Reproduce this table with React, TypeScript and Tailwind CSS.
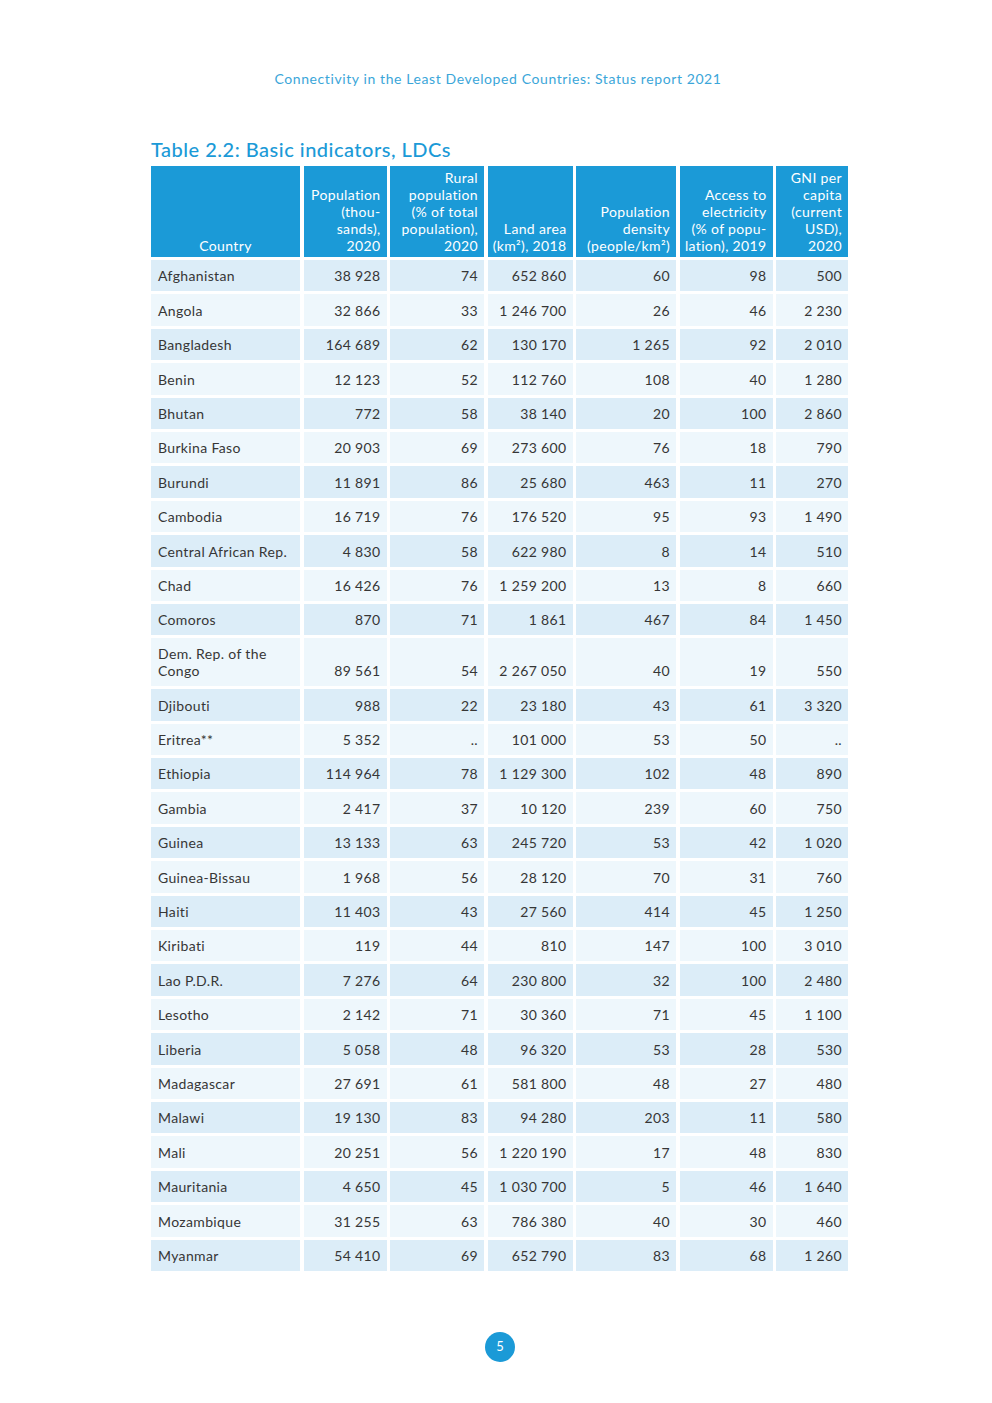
import React from "react";

const headers: React.ReactNode[] = [
  <>Country</>,
  <>Population<br />(thou-<br />sands),<br />2020</>,
  <>Rural<br />population<br />(% of total<br />population),<br />2020</>,
  <>Land area<br />(km²), 2018</>,
  <>Population<br />density<br />(people/km²)</>,
  <>Access to<br />electricity<br />(% of popu-<br />lation), 2019</>,
  <>GNI per<br />capita<br />(current<br />USD),<br />2020</>,
];

const rows: [React.ReactNode, string, string, string, string, string, string][] = [
  ["Afghanistan", "38 928", "74", "652 860", "60", "98", "500"],
  ["Angola", "32 866", "33", "1 246 700", "26", "46", "2 230"],
  ["Bangladesh", "164 689", "62", "130 170", "1 265", "92", "2 010"],
  ["Benin", "12 123", "52", "112 760", "108", "40", "1 280"],
  ["Bhutan", "772", "58", "38 140", "20", "100", "2 860"],
  ["Burkina Faso", "20 903", "69", "273 600", "76", "18", "790"],
  ["Burundi", "11 891", "86", "25 680", "463", "11", "270"],
  ["Cambodia", "16 719", "76", "176 520", "95", "93", "1 490"],
  ["Central African Rep.", "4 830", "58", "622 980", "8", "14", "510"],
  ["Chad", "16 426", "76", "1 259 200", "13", "8", "660"],
  ["Comoros", "870", "71", "1 861", "467", "84", "1 450"],
  [<>Dem. Rep. of the<br />Congo</>, "89 561", "54", "2 267 050", "40", "19", "550"],
  ["Djibouti", "988", "22", "23 180", "43", "61", "3 320"],
  ["Eritrea**", "5 352", "..", "101 000", "53", "50", ".."],
  ["Ethiopia", "114 964", "78", "1 129 300", "102", "48", "890"],
  ["Gambia", "2 417", "37", "10 120", "239", "60", "750"],
  ["Guinea", "13 133", "63", "245 720", "53", "42", "1 020"],
  ["Guinea-Bissau", "1 968", "56", "28 120", "70", "31", "760"],
  ["Haiti", "11 403", "43", "27 560", "414", "45", "1 250"],
  ["Kiribati", "119", "44", "810", "147", "100", "3 010"],
  ["Lao P.D.R.", "7 276", "64", "230 800", "32", "100", "2 480"],
  ["Lesotho", "2 142", "71", "30 360", "71", "45", "1 100"],
  ["Liberia", "5 058", "48", "96 320", "53", "28", "530"],
  ["Madagascar", "27 691", "61", "581 800", "48", "27", "480"],
  ["Malawi", "19 130", "83", "94 280", "203", "11", "580"],
  ["Mali", "20 251", "56", "1 220 190", "17", "48", "830"],
  ["Mauritania", "4 650", "45", "1 030 700", "5", "46", "1 640"],
  ["Mozambique", "31 255", "63", "786 380", "40", "30", "460"],
  ["Myanmar", "54 410", "69", "652 790", "83", "68", "1 260"],
];

export default function App() {
  return (
    <div
      className="w-[992px] min-h-[1403px] bg-white text-[#363636]"
      style={{ fontFamily: "Lato, 'Open Sans', sans-serif" }}
    >
      {/* Running header */}
      <div className="pt-[70px] pl-[4px] text-center text-[14px] leading-[18px] tracking-[0.6px] text-[#3ba6d9]">
        Connectivity in the Least Developed Countries: Status report 2021
      </div>

      <div className="ml-[151px] w-[697px]">
        <h2 className="mt-[49px] text-[20px] leading-[24px] font-medium tracking-[0.5px] text-[#1b9ad7]">
          Table 2.2: Basic indicators, LDCs
        </h2>

        <div className="mt-[5px] grid grid-cols-[149px_83px_94px_85px_100px_93px_72px] gap-x-[3.5px] gap-y-[3px] text-[14px] leading-[17px] tracking-[0.35px]">
          {/* Header */}
          {headers.map((h, i) => (
            <div
              key={i}
              className={`flex items-end bg-[#1b9ad7] pt-[3px] pb-[3px] text-white ${
                i === 0 ? "justify-center" : "justify-end pr-[6px] text-right"
              }`}
            >
              <span>{h}</span>
            </div>
          ))}

          {/* Body */}
          {rows.map((r, ri) =>
            r.map((c, ci) => (
              <div
                key={`${ri}-${ci}`}
                className={`flex min-h-[31.4px] items-end py-[7px] ${
                  ri % 2 === 0 ? "bg-[#dcedf8]" : "bg-[#eef7fc]"
                } ${ci === 0 ? "pl-[7px]" : "justify-end pr-[6px]"}`}
              >
                <span>{c}</span>
              </div>
            ))
          )}
        </div>
      </div>

      {/* Page number */}
      <div className="mt-[61px] flex justify-center pl-[8px]">
        <div className="flex h-[30px] w-[30px] items-center justify-center rounded-full bg-[#1b9ad7] text-[13px] text-white">
          5
        </div>
      </div>
    </div>
  );
}
